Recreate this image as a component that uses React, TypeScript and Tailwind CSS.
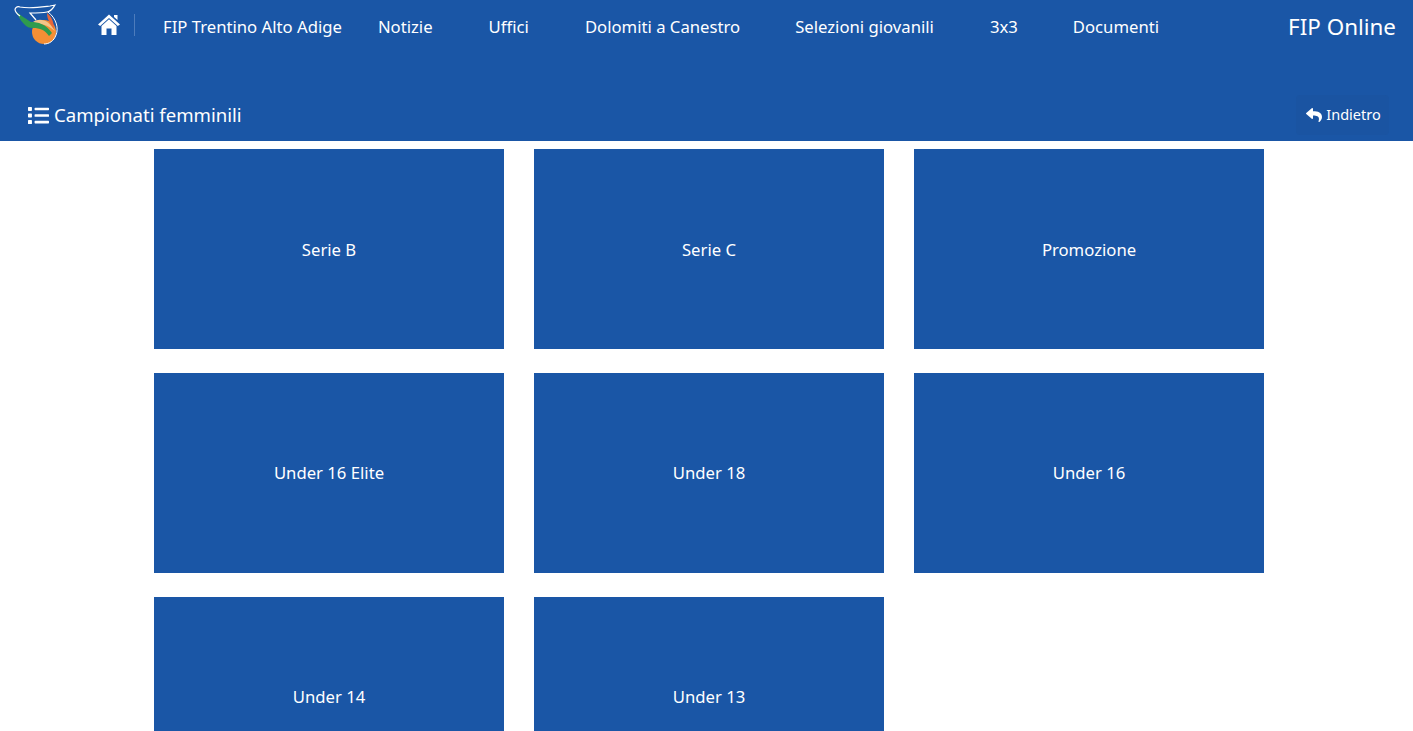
import { FaList, FaReply } from "react-icons/fa";

const font = { fontFamily: '"Noto Sans", "Open Sans", sans-serif' };

const navItems = [
  { label: "FIP Trentino Alto Adige", className: "ml-[28px]" },
  { label: "Notizie", className: "ml-[36px]" },
  { label: "Uffici", className: "ml-[56px]" },
  { label: "Dolomiti a Canestro", className: "ml-[56px]" },
  { label: "Selezioni giovanili", className: "ml-[55px]" },
  { label: "3x3", className: "ml-[56px]" },
  { label: "Documenti", className: "ml-[55px]" },
];

const championships = [
  "Serie B",
  "Serie C",
  "Promozione",
  "Under 16 Elite",
  "Under 18",
  "Under 16",
  "Under 14",
  "Under 13",
];

function Logo() {
  return (
    <svg width="50" height="46" viewBox="10 0 50 46" className="ml-[10px] shrink-0">
      <circle cx="44" cy="32" r="12" fill="#f58f35" />
      <path d="M33 22 C40 17 49 20 55 31 C49 26 42 23 35 24 Z" fill="#f3c58a" />
      <path d="M17 12 C22 17 27 19 31 22 C38 22 46 24 52 33 L49 36 C45 30 40 28 33 28 C29 28 27 27 24 24 C20 20 18 16 17 12 Z" fill="#2e9b4e" />
      <path d="M47 13 C51 16 54 21 54 29 C51 25 47 20 47 13 Z" fill="#e8663a" />
      <path d="M48 12 C56 18 59 28 56 35 C54 41 49 44 44 44" fill="none" stroke="#ffffff" strokeWidth="1" />
      <path d="M15 9 C16 7 18 6 20 7 C30 9 42 7 50 6 L55 5 C53 8 52 11 47 12 C42 13 36 13 30 13 L36 20" fill="none" stroke="#ffffff" strokeWidth="1.2" />
      <path d="M15 9 C15 12 17 14 20 16" fill="none" stroke="#ffffff" strokeWidth="1.2" />
    </svg>
  );
}

function HomeIcon() {
  return (
    <svg width="22" height="22" viewBox="0 0 22 22" className="ml-[38px] mt-[14px] shrink-0" fill="#ffffff">
      <path d="M11 0.5 L22 10.5 L19.8 12 L11 4 L2.2 12 L0 10.5 Z" />
      <path d="M16 1 H19.5 V6 L16 3 Z" />
      <path d="M3.5 12 L11 5.3 L18.5 12 V21 H13.5 V14.5 H8.5 V21 H3.5 Z" />
    </svg>
  );
}

export default function App() {
  return (
    <div className="h-[731px] overflow-hidden bg-white" style={font}>
      <header className="h-[141px] bg-[#1a56a6] text-white">
        <div className="flex h-[54px] items-start">
          <Logo />
          <HomeIcon />
          <div className="ml-[14px] mt-[14px] h-[22px] w-px bg-[#4d7cbc]" />
          <nav className="mt-[15px] flex text-[16.7px] leading-[24px]">
            {navItems.map((item) => (
              <a key={item.label} className={item.className}>
                {item.label}
              </a>
            ))}
          </nav>
          <span className="ml-auto mr-[17px] mt-[10px] text-[22.4px] leading-[34px]">FIP Online</span>
        </div>
        <div className="flex items-center justify-between pl-[28px] pr-[24px] pt-[41px]">
          <h1 className="flex items-center gap-[5px] text-[18.6px] leading-[40px]">
            <FaList className="text-[21px]" />
            Campionati femminili
          </h1>
          <button className="flex h-[40px] w-[93px] items-center justify-center gap-[4px] rounded bg-[#1a54a2] pl-[2px] text-[14.5px]">
            <FaReply className="text-[16px]" />
            Indietro
          </button>
        </div>
      </header>
      <main className="ml-[154px] mt-[8px] grid w-[1110px] grid-cols-[350px_350px_350px] gap-x-[30px] gap-y-[24px]">
        {championships.map((name, i) => (
          <a
            key={name}
            className={`flex h-[200px] items-center justify-center bg-[#1a56a6] text-[16.7px] text-white ${i < 3 ? "pt-[2px]" : ""}`}
          >
            {name}
          </a>
        ))}
      </main>
    </div>
  );
}
